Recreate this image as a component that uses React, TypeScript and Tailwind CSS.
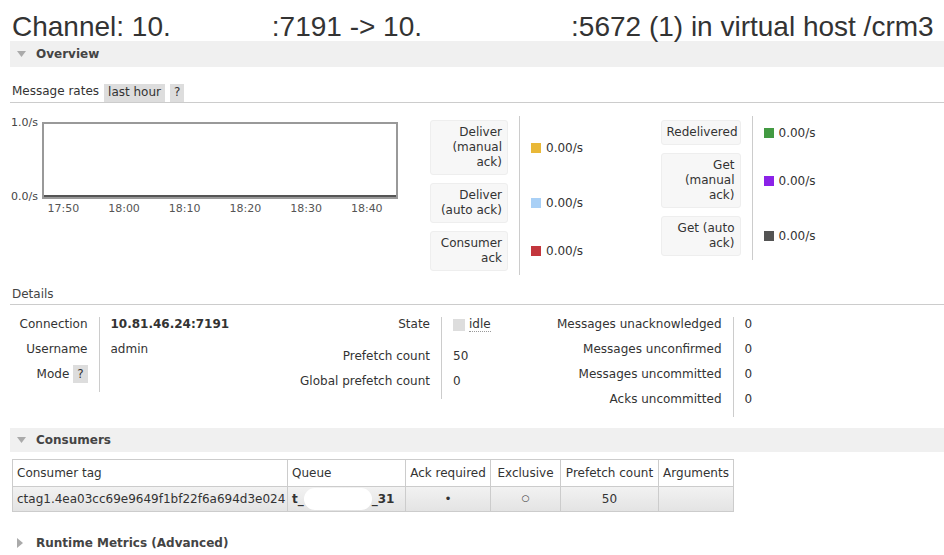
import React from 'react'

type Rate = { label: string; color: string }

const leftRates: Rate[] = [
  { label: 'Deliver (manual ack)', color: 'bg-[#e9b838]' },
  { label: 'Deliver (auto ack)', color: 'bg-[#a9d0f6]' },
  { label: 'Consumer ack', color: 'bg-[#c3363d]' },
]

const rightRates: Rate[] = [
  { label: 'Redelivered', color: 'bg-[#429a42]' },
  { label: 'Get (manual ack)', color: 'bg-[#8b22e8]' },
  { label: 'Get (auto ack)', color: 'bg-[#545454]' },
]

const ticks = ['17:50', '18:00', '18:10', '18:20', '18:30', '18:40']

function SectionHeader({ title, open = true, tall = false }: { title: string; open?: boolean; tall?: boolean }) {
  return (
    <div className={`ml-[10px] ${tall ? 'h-[26px]' : 'h-[24px]'} flex items-center ${open ? 'bg-[#f0f0f0]' : ''}`}>
      {open ? (
        <svg className="ml-[7px] w-[9px] h-[6px]" viewBox="0 0 9 6">
          <polygon points="0,0 9,0 4.5,6" fill="#aaa" />
        </svg>
      ) : (
        <svg className="ml-[7px] w-[6px] h-[10px]" viewBox="0 0 6 10">
          <polygon points="0,0 6,5 0,10" fill="#aaa" />
        </svg>
      )}
      <span className={`${open ? 'ml-[10px]' : 'ml-[13px]'} font-bold text-[#444]`}>{title}</span>
    </div>
  )
}

function RateTable({ rates, boxWidth }: { rates: Rate[]; boxWidth: string }) {
  return (
    <table className="border-collapse">
      <tbody>
        {rates.map((r) => (
          <tr key={r.label}>
            <th className="p-0 pr-[11px] py-[4px] font-normal align-middle">
              <div className={`${boxWidth} bg-[#f7f7f7] border border-[#eee] rounded-[3px] px-[5px] py-[4px] text-right leading-[15px]`}>
                {r.label}
              </div>
            </th>
            <td className="border-l border-[#ccc] pl-[11px] w-[100px] align-middle">
              <div className="flex items-center gap-[5px]">
                <span className={`w-[10px] h-[10px] ${r.color}`} />
                <span>0.00/s</span>
              </div>
            </td>
          </tr>
        ))}
      </tbody>
    </table>
  )
}

function Chart() {
  return (
    <div className="ml-[10px] mt-[19px] flex">
      <div className="w-[32px] h-[85px] -mt-[5px] pr-[4px] flex flex-col justify-between items-end text-[11px] leading-[11px] text-[#444]">
        <span>1.0/s</span>
        <span>0.0/s</span>
      </div>
      <div>
        <div className="w-[356px] h-[77px] border-2 border-[#999] flex flex-col justify-end">
          <div className="h-[2px] bg-[#555]" />
        </div>
        <div className="flex -ml-[9px] mt-[4px] text-[11px] leading-[12px] text-[#555]">
          {ticks.map((t) => (
            <span key={t} className="w-[60.7px] text-center">
              {t}
            </span>
          ))}
        </div>
      </div>
    </div>
  )
}

function DetailRow({ label, children, wide, pad = 'pb-[10px]' }: { label: React.ReactNode; children?: React.ReactNode; wide: string; pad?: string }) {
  return (
    <tr>
      <th className={`${wide} p-0 pr-[11px] ${pad} text-right font-normal align-top leading-[15px]`}>{label}</th>
      <td className={`p-0 pl-[11px] ${pad} border-l border-[#ccc] align-top leading-[15px]`}>{children}</td>
    </tr>
  )
}

export default function App() {
  return (
    <div className="w-[944px] h-[555px] overflow-hidden bg-white text-[#333] text-[12px] font-['DejaVu_Sans',Verdana,sans-serif]">
      {/* title */}
      <h1 className="mt-[13px] pl-[12px] text-[28px] leading-[28px] font-normal text-[#333] whitespace-nowrap font-['Liberation_Sans',Arial,sans-serif]">
        Channel: 10.<span className="inline-block w-[101px]" />:7191 -&gt; 10.<span className="inline-block w-[149px]" />:5672 (1) in virtual host /crm3
      </h1>

      <SectionHeader title="Overview" tall />

      <div className="ml-[10px] mt-[17px] h-[19px] flex items-end border-b border-[#ccc]">
        <span className="pl-[2px] pb-[2px]">Message rates</span>
        <span className="ml-[5px] bg-[#ddd] px-[4px] h-[18px] leading-[16px]">last hour</span>
        <span className="ml-[5px] bg-[#ddd] px-[4px] h-[18px] leading-[16px]">?</span>
      </div>

      <div className="flex items-start">
        <Chart />
        <div className="ml-[32px] mt-[13px]">
          <RateTable rates={leftRates} boxWidth="w-[78px]" />
        </div>
        <div className="ml-[41px] mt-[13px]">
          <RateTable rates={rightRates} boxWidth="w-[80px]" />
        </div>
      </div>

      {/* details */}
      <div className="ml-[10px] mt-[12px] pl-[2px] pb-[2px] leading-[15px] border-b border-[#ccc] text-[#444]">Details</div>

      <div className="mt-[12px] ml-[12px] flex items-start">
        <table className="border-collapse">
          <tbody>
            <DetailRow label="Connection" wide="w-[87px]">
              <b className="inline-block w-[130px]">10.81.46.24:7191</b>
            </DetailRow>
            <DetailRow label="Username" wide="w-[87px]">admin</DetailRow>
            <DetailRow
              label={
                <span>
                  Mode <span className="bg-[#ddd] px-[4px] py-[2px]">?</span>
                </span>
              }
              wide="w-[87px]"
            />
          </tbody>
        </table>

        <table className="border-collapse">
          <tbody>
            <DetailRow label="State" wide="w-[201px]" pad="pb-[14px]">
              <span className="inline-flex items-center gap-[4px]">
                <span className="w-[12px] h-[12px] bg-[#ddd]" />
                <span className="border-b border-dotted border-[#999] leading-[14px]">idle</span>
              </span>
            </DetailRow>
            <DetailRow label="Prefetch count" wide="w-[201px]">
              <span className="inline-block w-[89px]">50</span>
            </DetailRow>
            <DetailRow label="Global prefetch count" wide="w-[201px]">0</DetailRow>
          </tbody>
        </table>

        <table className="border-collapse">
          <tbody>
            <DetailRow label="Messages unacknowledged" wide="w-[191px]">0</DetailRow>
            <DetailRow label="Messages unconfirmed" wide="w-[191px]">0</DetailRow>
            <DetailRow label="Messages uncommitted" wide="w-[191px]">0</DetailRow>
            <DetailRow label="Acks uncommitted" wide="w-[191px]">0</DetailRow>
          </tbody>
        </table>
      </div>

      {/* consumers */}
      <div className="mt-[11px]">
        <SectionHeader title="Consumers" />
      </div>

      <table className="mt-[7px] ml-[12px] w-[721px] table-fixed border-collapse">
        <colgroup>
          <col className="w-[275px]" />
          <col className="w-[118px]" />
          <col className="w-[85px]" />
          <col className="w-[70px]" />
          <col className="w-[98px]" />
          <col className="w-[75px]" />
        </colgroup>
        <thead>
          <tr className="h-[27px]">
            <th className="border border-[#ccc] px-[4px] text-left font-normal">Consumer tag</th>
            <th className="border border-[#ccc] px-[4px] text-left font-normal">Queue</th>
            <th className="border border-[#ccc] px-0 text-center font-normal whitespace-nowrap">Ack required</th>
            <th className="border border-[#ccc] px-0 text-center font-normal">Exclusive</th>
            <th className="border border-[#ccc] px-0 text-center font-normal whitespace-nowrap">Prefetch count</th>
            <th className="border border-[#ccc] px-0 text-center font-normal">Arguments</th>
          </tr>
        </thead>
        <tbody>
          <tr className="h-[25px] bg-gradient-to-b from-[#f2f2f2] to-[#e3e3e3]">
            <td className="border border-[#ccc] px-[4px] whitespace-nowrap">ctag1.4ea03cc69e9649f1bf22f6a694d3e024</td>
            <td className="border border-[#ccc] px-[4px] font-bold whitespace-nowrap">
              <span className="inline-flex items-center">
                t_<span className="inline-block w-[68px] h-[22px] rounded-full bg-white" />_31
              </span>
            </td>
            <td className="border border-[#ccc] text-center text-[12px]">•</td>
            <td className="border border-[#ccc] text-center text-[9px]">○</td>
            <td className="border border-[#ccc] text-center">50</td>
            <td className="border border-[#ccc]" />
          </tr>
        </tbody>
      </table>

      <div className="mt-[19px]">
        <SectionHeader title="Runtime Metrics (Advanced)" open={false} />
      </div>
    </div>
  )
}
